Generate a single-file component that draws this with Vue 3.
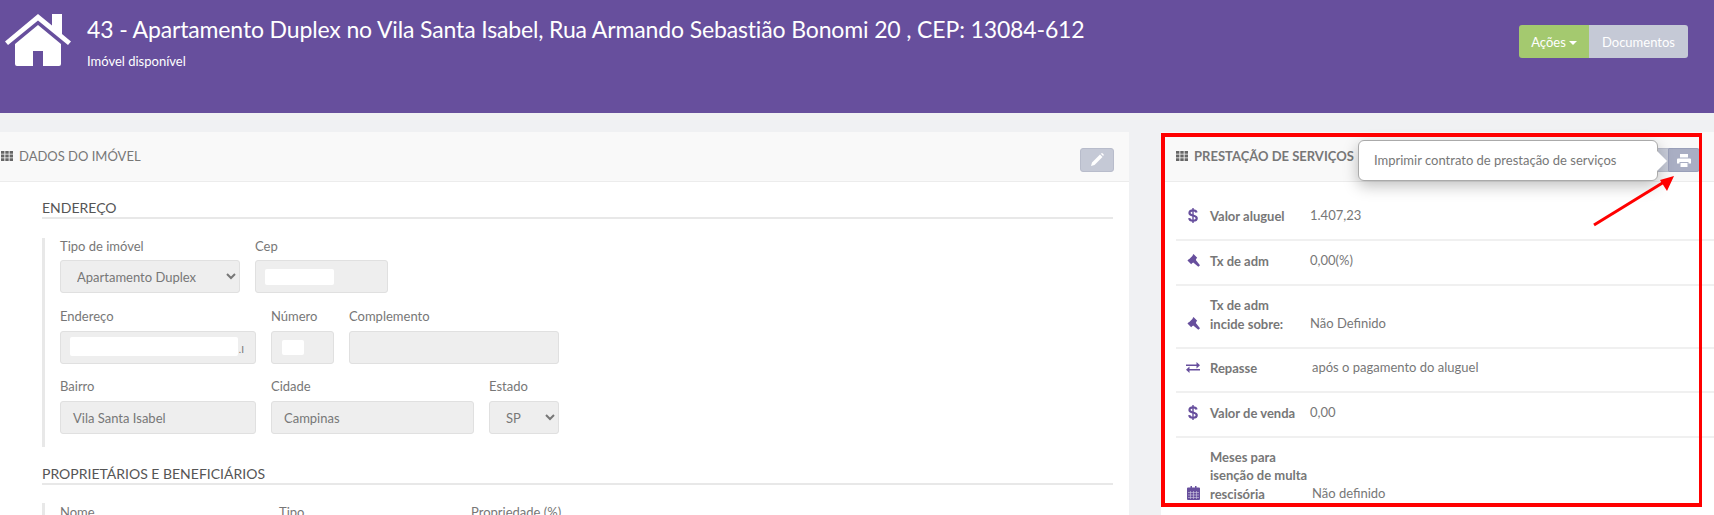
<script setup>
const rows = [
  { icon: 'dollar', label: ['Valor aluguel'], value: '1.407,23', h: 45, gap: 0 },
  { icon: 'gavel', label: ['Tx de adm'], value: '0,00(%)', h: 45, gap: 0 },
  { icon: 'gavel', label: ['Tx de adm', 'incide sobre:'], value: 'Não Definido', h: 63, gap: 0 },
  { icon: 'swap', label: ['Repasse'], value: 'após o pagamento do aluguel', h: 44, gap: 3 },
  { icon: 'dollar', label: ['Valor de venda'], value: '0,00', h: 45, gap: 0 },
  { icon: 'cal', label: ['Meses para', 'isenção de multa', 'rescisória'], value: 'Não definido', h: 81, gap: 3 }
]
</script>

<template>
  <div class="page">
    <header class="top">
      <svg class="house" viewBox="0 0 66 52" width="66" height="52">
        <path fill="#fff" d="M33 11 10 30v20a2 2 0 0 0 2 2h16V37h10v15h16a2 2 0 0 0 2-2V30z" />
        <path fill="#fff" d="M33 0 47 11.500V0h10v20l9 7.500-3 3.500L33 6.500 3 31l-3-3.500z" />
      </svg>
      <div class="heading">
        <h1>43 - Apartamento Duplex no Vila Santa Isabel, Rua Armando Sebastião Bonomi 20 , CEP: 13084-612</h1>
        <p>Imóvel disponível</p>
      </div>
      <div class="actions">
        <span class="act green">Ações<i class="caret"></i></span>
        <span class="act grey">Documentos</span>
      </div>
    </header>

    <main class="columns">
      <section class="panel left">
        <div class="phead">
          <svg class="grid" viewBox="0 0 12 10" width="12" height="10"><path fill="#666" d="M0 0h3.400v2.800H0zM4.300 0h3.400v2.800H4.300zM8.600 0H12v2.800H8.600zM0 3.600h3.400v2.800H0zM4.300 3.600h3.400v2.800H4.300zM8.600 3.600H12v2.800H8.600zM0 7.200h3.400V10H0zM4.300 7.200h3.400V10H4.300zM8.600 7.200H12V10H8.600z" /></svg>
          <span class="ptitle">DADOS DO IMÓVEL</span>
          <span class="ibtn">
            <svg viewBox="0 0 14 14" width="14" height="14"><path fill="#fff" d="M10 1.500 12.500 4l-8 8L1 13l1-3.500zM10.800.700l.6-.4c.5-.3 1-.2 1.400.2l.7.7c.4.4.4 1 0 1.400l-.4.5z" /></svg>
          </span>
        </div>
        <div class="pbody">
          <h2>ENDEREÇO</h2>
          <div class="group">
            <div class="frow">
              <label class="f w180"><span>Tipo de imóvel</span>
                <select disabled class="ctl sel1"><option>Apartamento Duplex</option></select>
              </label>
              <label class="f w133"><span>Cep</span>
                <div class="ctl box"><b class="mask m-cep"></b></div>
              </label>
            </div>
            <div class="frow r2">
              <label class="f w196"><span>Endereço</span>
                <div class="ctl box"><em class="tick">.I</em><b class="mask m-end"></b></div>
              </label>
              <label class="f w63"><span>Número</span>
                <div class="ctl box"><b class="mask m-num"></b></div>
              </label>
              <label class="f w210"><span>Complemento</span>
                <div class="ctl box"></div>
              </label>
            </div>
            <div class="frow r3">
              <label class="f w196"><span>Bairro</span>
                <div class="ctl box txt">Vila Santa Isabel</div>
              </label>
              <label class="f w203"><span>Cidade</span>
                <div class="ctl box txt">Campinas</div>
              </label>
              <label class="f w70"><span>Estado</span>
                <select disabled class="ctl sel2"><option>SP</option></select>
              </label>
            </div>
          </div>
          <h2 class="second">PROPRIETÁRIOS E BENEFICIÁRIOS</h2>
          <div class="group owners">
            <span class="c1">Nome</span><span class="c2">Tipo</span><span class="c3">Propriedade (%)</span>
          </div>
        </div>
      </section>

      <section class="panel right">
        <div class="phead">
          <svg class="grid" viewBox="0 0 12 10" width="12" height="10"><path fill="#666" d="M0 0h3.400v2.800H0zM4.300 0h3.400v2.800H4.300zM8.600 0H12v2.800H8.600zM0 3.600h3.400v2.800H0zM4.300 3.600h3.400v2.800H4.300zM8.600 3.600H12v2.800H8.600zM0 7.200h3.400V10H0zM4.300 7.200h3.400V10H4.300zM8.600 7.200H12V10H8.600z" /></svg>
          <span class="ptitle">PRESTAÇÃO DE SERVIÇOS</span>
          <span class="ibtn sibling"></span>
          <span class="ibtn print">
            <svg viewBox="0 0 14 13" width="14" height="13"><path fill="#fff" d="M3 0h8v3.500H3zM1 4.500h12a1 1 0 0 1 1 1V9.500h-2.500V8h-9v1.500H0V5.500a1 1 0 0 1 1-1zM3.500 9h7v4h-7z" /></svg>
          </span>
        </div>
        <div class="list">
          <div v-for="(r, i) in rows" :key="i" class="row" :style="{ height: r.h + 'px' }">
            <span class="ic">
              <svg v-if="r.icon === 'dollar'" viewBox="0 0 10 16" width="10" height="15"><path fill="none" stroke="#674f9d" stroke-width="2.300" d="M8.800 4.800C8.500 3.200 6.900 2.500 5 2.500c-2.200 0-3.800 1-3.800 2.700C1.200 9 9 7 9 11c0 1.700-1.800 2.600-4 2.600-2.100 0-3.800-.9-4.100-2.800" /><path stroke="#674f9d" stroke-width="1.500" d="M5 0v16" /></svg>
              <svg v-else-if="r.icon === 'gavel'" viewBox="0 0 14 14" width="13" height="13"><path fill="#674f9d" d="M7 0 11 4 10 5 9.500 6.500 14 12l-1.800 1.800-5.500-4.600L5.500 10 4.500 11 .5 7 1.500 6 2.500 5.500 6 2l.2-1z" /></svg>
              <svg v-else-if="r.icon === 'swap'" viewBox="0 0 14 11" width="14" height="11"><path fill="#674f9d" d="M0 2.500h10.500V0L14 3.300l-3.500 3.200V4H0zM14 7v1.500H3.500V11L0 7.700 3.500 4.500V7z" /></svg>
              <svg v-else viewBox="0 0 13 14" width="13" height="14"><path fill="#674f9d" d="M1 1.500h2.500V0h1.500v1.500h3V0h1.500v1.500H12a1 1 0 0 1 1 1V13a1 1 0 0 1-1 1H1a1 1 0 0 1-1-1V2.500a1 1 0 0 1 1-1z" /><path stroke="#cfc8e0" stroke-width=".6" d="M1 6.500h11M1 9h11M1 11.500h11M3.500 5v8M6.500 5v8M9.500 5v8" /></svg>
            </span>
            <span class="lab"><span v-for="l in r.label" :key="l">{{ l }}</span></span>
            <span class="val" :class="{ shift: r.gap }">{{ r.value }}</span>
          </div>
        </div>
      </section>
    </main>

    <div class="tip">Imprimir contrato de prestação de serviços<i class="tip-arrow"></i></div>
    <div class="redbox"></div>
    <svg class="arrow" viewBox="0 0 90 56" width="90" height="56"><path stroke="#f00" stroke-width="3" d="M4 53 74 10" fill="none" /><path fill="#f00" d="M84 4 70 8l7 11z" /></svg>
  </div>
</template>

<style>
html, body { margin: 0; background: #f0f1f3; overflow: hidden; }
</style>

<style scoped>
.page { position: relative; width: 1714px; height: 515px; overflow: hidden; background: #f0f1f3; font-family: Lato, "Open Sans", sans-serif; font-size: 13px; color: #777; }
.top { height: 113px; box-sizing: border-box; background: #674f9d; color: #fff; display: flex; align-items: flex-start; padding: 14px 26px 0 5px; }
.house { flex: none; }
.heading { margin-left: 16px; }
h1 { margin: 1px 0 0; font-size: 23px; letter-spacing: -.14px; font-weight: 400; line-height: 29px; white-space: nowrap; }
p { margin: 10px 0 0; font-size: 13px; line-height: 15px; }
.actions { margin-left: auto; margin-top: 11px; display: flex; height: 33px; border-radius: 3px; overflow: hidden; }
.act { display: flex; align-items: center; justify-content: center; font-size: 13px; }
.green { width: 70px; background: #a4c96f; }
.grey { width: 99px; background: #c5c9d6; }
.caret { width: 0; height: 0; margin-left: 3px; margin-top: 2px; border: 4px solid transparent; border-top-color: #fff; border-bottom: 0; }

.columns { display: flex; gap: 32px; padding-top: 19px; height: 383px; box-sizing: content-box; }
.panel { background: #fff; height: 383px; overflow: hidden; flex: none; }
.left { width: 1129px; }
.right { width: 553px; }
.phead { height: 49px; background: #f9f9f9; border-bottom: 1px solid #ececec; display: flex; align-items: center; }
.left .phead { padding: 0 15px 0 1px; }
.left .grid { margin-right: 6px; }
.right .phead { padding: 0 14px 0 15px; }
.grid { flex: none; margin-right: 6px; margin-top: -2px; }
.ptitle { font-size: 13px; font-weight: 700; color: #777; white-space: nowrap; margin-top: -2px; }
.left .ptitle { font-weight: 400; }
.ibtn { margin-left: auto; margin-top: 7px; width: 34px; height: 24px; border-radius: 3px; background: #c5c9d6; display: flex; align-items: center; justify-content: center; border: 1px solid #b8bccb; box-sizing: border-box; }
.print { margin-left: 0; width: 32px; border-radius: 0 3px 3px 0; background: #a9aec3; border-color: #999fb8; }
.sibling { border-radius: 3px 0 0 3px; border-right: 0; }

.pbody { padding: 16px 16px 0 42px; }
h2 { margin: 0; height: 19px; line-height: 20px; font-size: 14px; font-weight: 400; color: #555; border-bottom: 2px solid #e8e8e8; }
.group { border-left: 3px solid #e8e8e8; margin-top: 19px; padding-left: 15px; }
.frow { display: flex; gap: 15px; padding-bottom: 14px; }
.frow.r2 { padding-top: 1px; }
.frow.r3 { padding-bottom: 13px; }
.frow.r2 .f > span, .frow.r3 .f > span { margin-bottom: 7px; }
.f { display: flex; flex-direction: column; flex: none; }
.f > span { font-size: 13px; line-height: 16px; margin-bottom: 6px; }
.w180 { width: 180px; } .w133 { width: 133px; } .w196 { width: 196px; } .w63 { width: 63px; } .w210 { width: 210px; } .w203 { width: 203px; } .w70 { width: 70px; }
.ctl { height: 33px; box-sizing: border-box; width: 100%; border: 1px solid #e0e0e0; border-radius: 3px; background-color: #eee; color: #777; font: 13px Lato, sans-serif; opacity: 1; }
.sel1 { padding-left: 12px; }
.sel2 { padding-left: 12px; }
.box { position: relative; }
.txt { display: flex; align-items: center; padding-left: 12px; }
.mask { position: absolute; background: #fff; border-radius: 2px; }
.m-cep { left: 9px; top: 8px; width: 69px; height: 16px; }
.m-end { left: 9px; top: 5px; width: 168px; height: 19px; }
.m-num { left: 10px; top: 8px; width: 22px; height: 15px; }
.tick { position: absolute; right: 11px; top: 11px; font-style: normal; font-size: 10px; color: #777; }
.second { margin-top: 17px; }
.owners { display: flex; height: 30px; margin-top: 18px; padding-top: 1px; }
.c1 { width: 219px; } .c2 { width: 192px; }

.list { padding: 14px 0 0 15px; }
.row { display: flex; align-items: flex-end; border-bottom: 2px solid #f0f0f0; box-sizing: border-box; padding-bottom: 14px; }
.ic { width: 34px; flex: none; height: 16px; margin-bottom: 2px; display: flex; align-items: center; justify-content: center; }
.lab { width: 100px; flex: none; display: flex; flex-direction: column; font-weight: 700; font-size: 13px; line-height: 18.500px; }
.val { font-size: 13px; line-height: 19px; }
.shift { margin-left: 2px; }

.tip { position: absolute; left: 1358px; top: 140px; width: 300px; height: 41px; box-sizing: border-box; background: #fff; border: 1px solid #aaa; border-radius: 6px; padding-left: 15px; line-height: 38px; font-size: 13px; color: #777; box-shadow: 0 5px 15px rgba(0,0,0,.25); }
.tip-arrow { position: absolute; right: -10px; top: 10px; border: 10px solid transparent; border-right: 0; border-left-color: #fff; }
.redbox { position: absolute; left: 1161px; top: 133px; width: 541px; height: 374px; box-sizing: border-box; border: solid #f00; border-width: 4px 3px 4px 4px; pointer-events: none; }
.arrow { position: absolute; left: 1590px; top: 172px; }
</style>
